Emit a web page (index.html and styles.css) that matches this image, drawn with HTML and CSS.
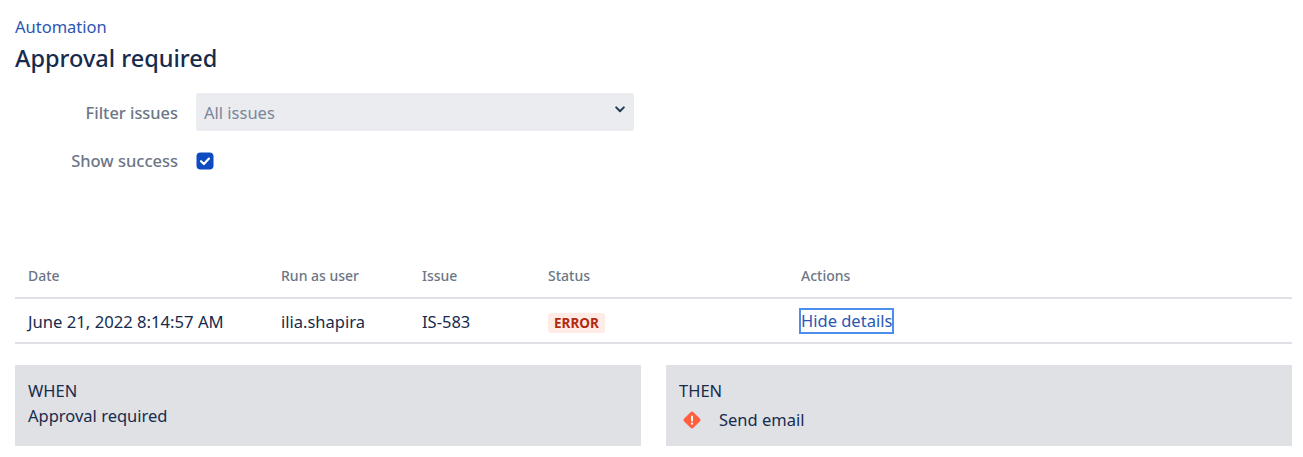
FILE: index.html
```html
<!DOCTYPE html>
<html lang="en">
<head>
<meta charset="utf-8">
<title>Approval required</title>
<link rel="stylesheet" href="styles.css">
</head>
<body>
<main class="page">
  <a class="crumb" href="#">Automation</a>
  <h1 class="title">Approval required</h1>
  <form class="filters">
    <div class="field">
      <label class="field-label">Filter issues</label>
      <div class="select">
        <span>All issues</span>
        <svg class="chevron" width="10" height="7" viewBox="0 0 10 7"><path d="M1.2 1.4 5 5.2l3.8-3.8" fill="none" stroke="#253858" stroke-width="2" stroke-linecap="round" stroke-linejoin="round"/></svg>
      </div>
    </div>
    <div class="field field-check">
      <label class="field-label field-label-check">Show success</label>
      <svg class="check" width="18" height="18" viewBox="0 0 18 18"><rect x="0.5" y="0.5" width="17" height="17" rx="4" fill="#0e4bc0"/><path d="M5 9.2 7.9 12 13 6.6" fill="none" stroke="#fff" stroke-width="2.2" stroke-linecap="round" stroke-linejoin="round"/></svg>
    </div>
  </form>
  <section class="table">
    <div class="row row-head">
      <div>Date</div><div>Run as user</div><div>Issue</div><div>Status</div><div>Actions</div>
    </div>
    <div class="row row-body">
      <div class="cell-date">June 21, 2022 8:14:57 AM</div>
      <div>ilia.shapira</div>
      <div>IS-583</div>
      <div><span class="lozenge">ERROR</span></div>
      <div><a class="details" href="#">Hide details</a></div>
    </div>
  </section>
  <section class="cards">
    <div class="card">
      <div class="card-label">WHEN</div>
      <div class="card-item">Approval required</div>
    </div>
    <div class="card">
      <div class="card-label">THEN</div>
      <div class="card-item card-action">
        <svg class="warn" width="18" height="18" viewBox="0 0 18 18"><path d="M7.6 1.2a2 2 0 0 1 2.8 0l6.4 6.4a2 2 0 0 1 0 2.8l-6.4 6.4a2 2 0 0 1-2.8 0l-6.4-6.4a2 2 0 0 1 0-2.8z" fill="#ff5f3d"/><rect x="8" y="4.4" width="2" height="6" rx="1" fill="#fff"/><circle cx="9" cy="12.7" r="1.1" fill="#fff"/></svg>
        <span>Send email</span>
      </div>
    </div>
  </section>
</main>
</body>
</html>
```
FILE: styles.css
```css
* { box-sizing: border-box; }
html, body { margin: 0; padding: 0; background: #fff; }
body {
  font-family: "Noto Sans", "Open Sans", sans-serif;
  font-size: 16.5px;
  color: #172b4d;
}
.page { padding: 15px 11px 0 15px; }
.crumb {
  display: block;
  height: 24px;
  line-height: 24px;
  font-size: 16.5px;
  color: #2a56b4;
  text-decoration: none;
}
.title {
  margin: 3px 0 0;
  height: 32px;
  line-height: 32px;
  font-size: 23.5px;
  font-weight: 500;
  color: #172b4d;
}
.filters { margin-top: 19px; }
.field { display: flex; align-items: center; gap: 18px; height: 38px; }
.field-check { margin-top: 18px; height: 24px; }
.field-label {
  width: 163px;
  padding-top: 1px;
  text-align: right;
  font-size: 16.4px;
  font-weight: 500;
  color: #6c7686;
  line-height: 24px;
}
.field-label-check { padding-top: 0; font-size: 16.5px; }
.select {
  width: 438px;
  height: 38px;
  padding: 0 8px;
  display: flex;
  align-items: center;
  justify-content: space-between;
  background: #ebecf0;
  border-radius: 3px;
  font-size: 16.5px;
  color: #7a869a;
}
.chevron { margin: 0 1px 6px 0; }
.table { margin-top: 86px; }
.row { display: grid; grid-template-columns: 253px 141px 126px 253px 1fr; padding-left: 13px; }
.row-head {
  height: 40px;
  padding-bottom: 5px;
  align-items: center;
  border-bottom: 2px solid #dfe1e6;
  font-size: 14px;
  font-weight: 500;
  color: #6c7686;
}
.row-body {
  height: 45px;
  padding-top: 1px;
  align-items: center;
  border-bottom: 2px solid #dfe1e6;
  font-size: 16.5px;
}
.cell-date { font-size: 16.65px; }
.lozenge {
  display: inline-block;
  padding: 0 6px;
  height: 20px;
  line-height: 20px;
  border-radius: 3px;
  background: #ffebe6;
  color: #b32a10;
  font-size: 13.5px;
  font-weight: 700;
}
.details {
  display: inline-block;
  margin-left: -2px;
  line-height: 22px;
  border: 2px solid #4c8fee;
  color: #2a56b4;
  text-decoration: none;
}
.cards { display: grid; grid-template-columns: 1fr 1fr; gap: 25px; margin-top: 21px; }
.card {
  height: 81px;
  padding: 14px 13px 0;
  background: #dfe1e5;
  font-size: 16.5px;
  line-height: 24px;
}
.card-label { margin-bottom: 1px; }
.card-action { display: flex; align-items: center; gap: 18px; margin-top: 5px; }
.warn { flex: none; margin-left: 4px; }
```
